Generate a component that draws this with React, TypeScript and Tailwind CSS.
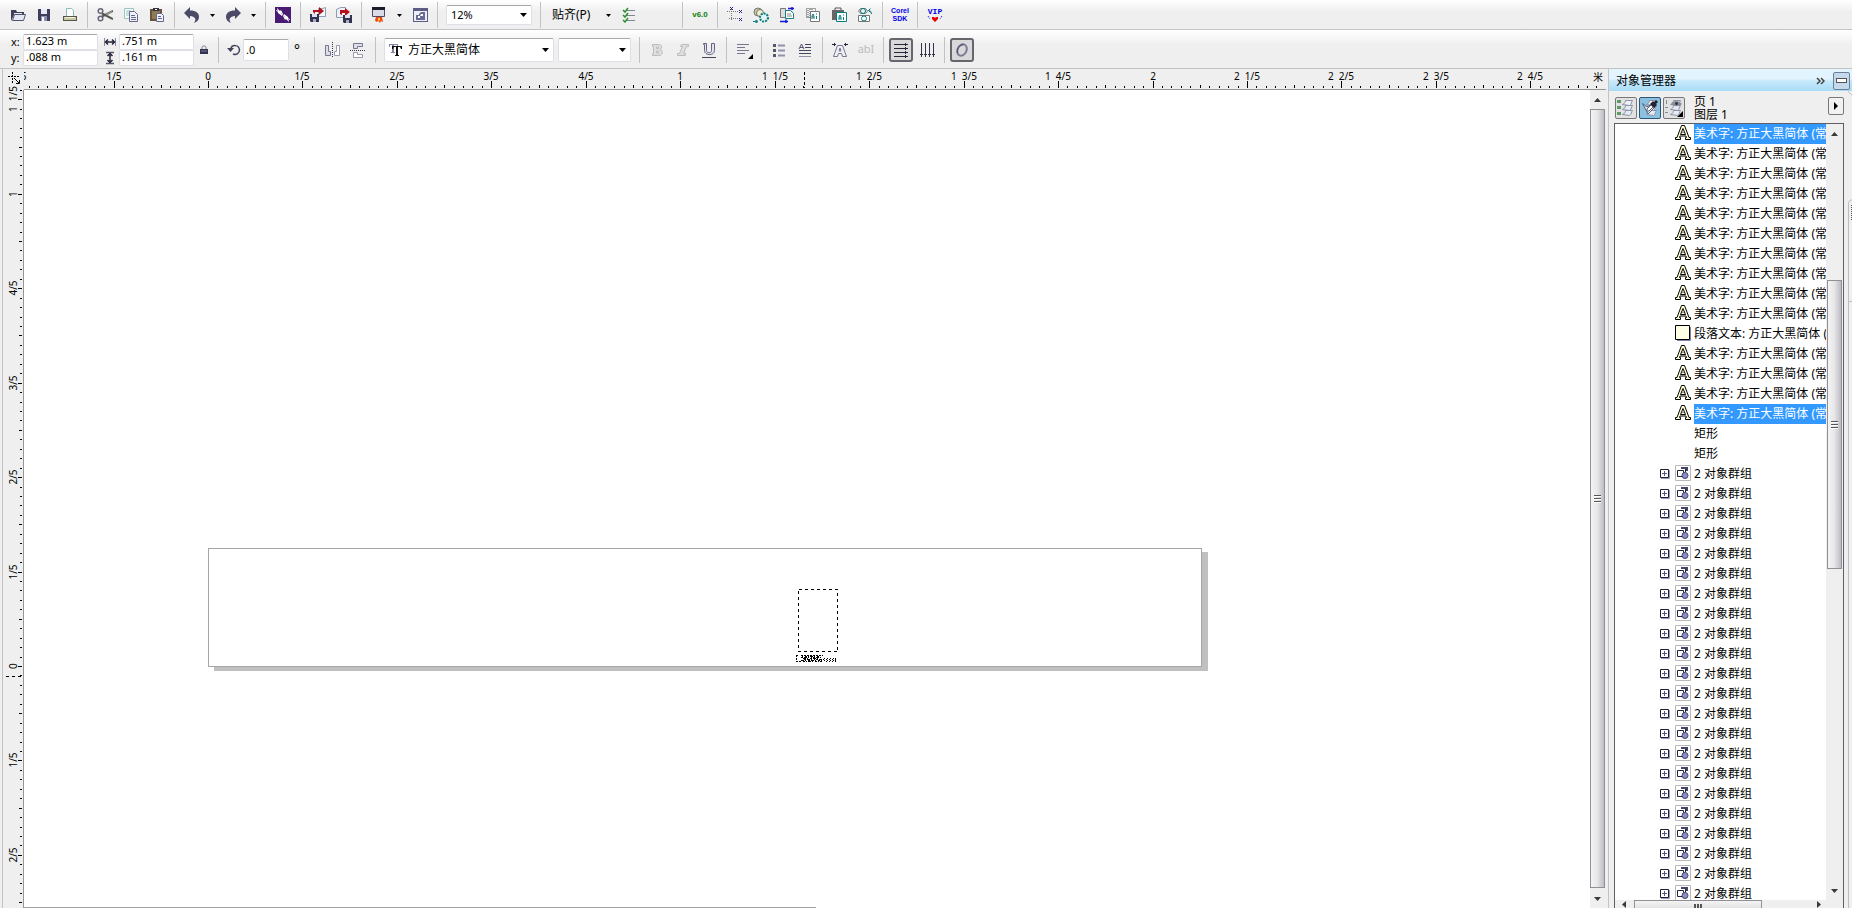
import type { ReactNode } from "react";

const SCALE = 94.45;
const FRACTIONS = ["", "1/5", "2/5", "3/5", "4/5"];

type TreeItem = {
  kind: "text" | "paragraph" | "rect" | "group";
  label: string;
  selected?: boolean;
};

const artistic: TreeItem = { kind: "text", label: "美术字: 方正大黑简体 (常规) (CHC)" };

const treeItems: TreeItem[] = [
  { ...artistic, selected: true },
  ...Array.from({ length: 9 }, () => artistic),
  { kind: "paragraph", label: "段落文本: 方正大黑简体 (常规) (CHC)" },
  ...Array.from({ length: 3 }, () => artistic),
  { ...artistic, selected: true },
  { kind: "rect", label: "矩形" },
  { kind: "rect", label: "矩形" },
  ...Array.from({ length: 22 }, (): TreeItem => ({ kind: "group", label: "2 对象群组" })),
];

function rulerLabel(step: number): string {
  const n = Math.abs(step);
  const whole = Math.floor(n / 5);
  const part = FRACTIONS[n % 5];
  if (n === 0) return "0";
  if (whole === 0) return part;
  return part ? `${whole}\u00a0\u00a0${part}` : `${whole}`;
}

function Icon({ children, size = 16 }: { children: ReactNode; size?: number }) {
  return (
    <svg width={size} height={size} viewBox={`0 0 ${size} ${size}`} fill="none" aria-hidden="true">
      {children}
    </svg>
  );
}

/* ---------- standard toolbar icons ---------- */

const OpenIcon = () => (
  <Icon>
    <path d="M1 14V3h5l1 2h7v3H4z" fill="#3f3e58" />
    <path d="M4 6h8v2H4z" fill="#dfe3f2" />
    <path d="M2.500 13.500 4.500 7.500h11l-2 6z" fill="#e3e6f3" stroke="#55546f" />
  </Icon>
);

const SaveIcon = () => (
  <Icon>
    <path d="M2 2h12v12H3l-1-1z" fill="#3f3e5c" />
    <path d="M5 2h6v5H5z" fill="#e8ebf7" />
    <path d="M5 9h6v5H5z" fill="#8f90b4" />
    <path d="M6 10h2v4H6z" fill="#fff" />
  </Icon>
);

const PrintIcon = () => (
  <Icon>
    <path d="M4.500 9V1.500h5l2 2V9" fill="#fff" stroke="#88bcb8" />
    <path d="M1 9h14v5H1z" fill="#57544a" />
    <path d="M2 10h12v3H2z" fill="#c9c7a6" />
    <path d="M3 10h10v1H3z" fill="#f5f4dc" />
  </Icon>
);

const CutIcon = () => (
  <Icon>
    <path d="M5 6.500 16 12M5 9.500 16 4" stroke="#55564f" strokeWidth="2" />
    <path d="M9 7.500 15 4.500" stroke="#b6b7aa" />
    <circle cx="3.500" cy="4" r="2.300" stroke="#66667a" strokeWidth="1.500" />
    <circle cx="3.500" cy="11.500" r="2.300" stroke="#66667a" strokeWidth="1.500" />
  </Icon>
);

const CopyIcon = () => (
  <Icon>
    <path d="M1.500 1.500h9v10h-9z" fill="#f4fbfa" stroke="#9dc4c0" />
    <path d="M3 4h5M3 6h3M3 8h3" stroke="#9dc4c0" />
    <path d="M6.500 4.500h5l3 3v7h-8z" fill="#eef0fb" stroke="#67678a" />
    <path d="M8 8.500h4M8 10.500h5M8 12.500h5" stroke="#67678a" />
  </Icon>
);

const PasteIcon = () => (
  <Icon>
    <path d="M1 2h12v12H1z" fill="#66533a" />
    <path d="M3 4h8v8H3z" fill="#8f7a58" />
    <path d="M4 1h6v3H4z" fill="#34313c" />
    <path d="M6 2h2v1H6z" fill="#fff" />
    <path d="M7.500 6.500h5l2 2v6h-7z" fill="#eef0fb" stroke="#67678a" />
    <path d="M9 9.500h3M9 11.500h4" stroke="#67678a" />
  </Icon>
);

const UndoIcon = () => (
  <Icon>
    <path d="M0 6 6 0v3.500c6 0 9 2.500 9 6.500 0 3-2 5-5 6 3-4 1-6.500-4-7V12z" fill="#4b4a66" />
  </Icon>
);

const RedoIcon = () => (
  <Icon>
    <path d="M16 6 10 0v3.500c-6 0-9 2.500-9 6.500 0 3 2 5 5 6-3-4-1-6.500 4-7V12z" fill="#4b4a66" />
  </Icon>
);

const ConnectIcon = () => (
  <Icon>
    <path d="M0 0h16v16H0z" fill="#4a1a72" />
    <path d="m2 1 3 3 1-1 2 4-1 2-4-3zM14 15l-3-3-1 1-2-4 1-2 4 3z" fill="#fff" />
    <path d="m1 3 2 2M13 11l2 2M6 6l4 4" stroke="#cdbbe0" />
  </Icon>
);

const ImportIcon = () => (
  <Icon>
    <path d="M8.500 1.500h4l3-1v9h-7z" fill="#f5f8fc" stroke="#8d9db0" />
    <path d="M3 5V3h6V0l5 4-5 4V5H5v2z" fill="#b3121d" />
    <path d="M0 7h9v8H1l-1-1z" fill="#33334f" />
    <path d="M2 7h5v3H2z" fill="#dde2f0" />
    <path d="M3 12h3v3H3z" fill="#a9abc8" />
  </Icon>
);

const ExportIcon = () => (
  <Icon>
    <path d="M.500 10.500v-8l4-2h5v10z" fill="#eef2f8" stroke="#8d9db0" />
    <path d="M4 7V3h5V1l5 4-5 4V6H6v2z" fill="#b3121d" />
    <path d="M7 8h9v8H8l-1-1z" fill="#33334f" />
    <path d="M9 8h5v3H9z" fill="#dde2f0" />
    <path d="M10 13h3v3h-3z" fill="#a9abc8" />
  </Icon>
);

const LaunchIcon = () => (
  <Icon>
    <path d="M1.500.500h12v9h-12z" fill="#d9dbe8" stroke="#4d4c66" />
    <path d="M1 0h13v3H1z" fill="#1d1c28" />
    <path d="M5 10h6l1 5-2-1-1 2-1.500-2L5 15l-1-2z" fill="#f04a12" />
    <path d="M7 11h2v2l-1 1-1-1z" fill="#ffd04a" />
  </Icon>
);

const WelcomeIcon = () => (
  <Icon>
    <path d="M1 1h15v14H1z" fill="#5c5c84" />
    <path d="M2 4h13v10H2z" fill="#eceef8" />
    <path d="M4 8h3V7l2-2h4v8H4z" fill="#6a6b94" />
    <path d="M9 7h2v2H8zM6 9h2v2H6z" fill="#fff" />
  </Icon>
);

const OptionsIcon = () => (
  <Icon>
    <path d="M6 3.500h8M6 8.500h8M6 13.500h8" stroke="#7f8796" />
    <path d="m2 3 2 2 3-4M2 8l2 2 3-4M2 13l2 2 3-4" stroke="#2f8f2c" strokeWidth="1.500" />
  </Icon>
);

const GuidesIcon = () => (
  <Icon size={18}>
    <path d="M5.500 3v12M1 5.500h11M3 12.500h12" stroke="#777" strokeDasharray="1 1" />
    <path d="m4 1 3 3m0-3L4 4M13 4l3 3m0-3-3 3M13 12l3 3m0-3-3 3" stroke="#23238c" />
  </Icon>
);

const CurveIcon = () => (
  <Icon>
    <circle cx="5" cy="5" r="4" fill="#c9c9a4" stroke="#777" />
    <circle cx="7" cy="6" r="3.500" fill="#efefcf" stroke="#777" />
    <circle cx="11" cy="10.500" r="4" fill="#e6f2f2" stroke="#0b8080" strokeWidth="2" strokeDasharray="2 1" />
    <path d="M0 14.500h4M3 13v3l2-1.500z" stroke="#0b8080" />
  </Icon>
);

const SwapIcon = () => (
  <Icon>
    <path d="M1.500 1.500h5v9h-5z" fill="#ddd" stroke="#777" />
    <path d="M6.500 3.500h5l3 3v5h-8z" fill="#fff" stroke="#118080" />
    <path d="M8 7h4M8 9h5" stroke="#888" />
    <path d="M9 1.500h6m-2-1.500v3M1 14.500h8m-2-2v4" stroke="#1515dd" strokeWidth="1.500" />
  </Icon>
);

const AiCopyIcon = () => (
  <Icon>
    <path d="M1.500 1.500h9v9h-9zM3 3v8M5 2v9M7 2v3" stroke="#555" strokeDasharray="1 1" />
    <path d="M5.500 4.500h9v10h-9z" fill="#fff" stroke="#777" />
    <path d="M7 12V9l1-2 1 2v3M7 10h2M11.500 9v3M11 7h1" stroke="#087c7c" />
  </Icon>
);

const AiPasteIcon = () => (
  <Icon>
    <path d="M1 3h12v10H1z" fill="#666" />
    <path d="M4 3V1h6v2" stroke="#555" />
    <path d="M5.500 5.500h10v9h-10z" fill="#fff" stroke="#087c7c" />
    <path d="M8 13v-3l1-2 1 2v3M8 11h2M12.500 10v3M12 8h1" stroke="#087c7c" />
  </Icon>
);

const SymbolIcon = () => (
  <Icon>
    <path d="M3.500 1.500h5l2 2.500-2 2.500h-5L1.500 4z" stroke="#777" />
    <path d="M1.500 8.500h11v6h-11z" fill="#fff" stroke="#777" />
    <circle cx="6" cy="4" r="2.500" stroke="#087c7c" />
    <circle cx="7" cy="11.500" r="2.500" stroke="#087c7c" />
    <path d="M14.500 7c0-2-1-3.500-3-3.500M13.500 1.500l-2 2 2 2" stroke="#087c7c" />
  </Icon>
);

/* ---------- property bar icons ---------- */

const WidthIcon = () => (
  <Icon size={14}>
    <path d="M1.500 3v8M12.500 3v8" stroke="#8889a8" />
    <path d="M3 7h8M5 4.500 2.500 7 5 9.500M9 4.500 11.500 7 9 9.500" stroke="#26253a" strokeWidth="1.500" />
  </Icon>
);

const HeightIcon = () => (
  <Icon size={14}>
    <path d="M3 1.500h8M3 12.500h8" stroke="#55556f" strokeWidth="1.500" />
    <path d="M7 3v8M4.500 5 7 2.500 9.500 5M4.500 9 7 11.500 9.500 9" stroke="#26253a" strokeWidth="1.500" />
  </Icon>
);

const LockIcon = () => (
  <Icon size={10}>
    <path d="M3 5V2.500c0-2 4-2 4 0V5" stroke="#77788f" />
    <path d="M1 4h8v5H1z" fill="#33334f" />
    <path d="M2 6h6" stroke="#7778a0" />
  </Icon>
);

const RotateIcon = () => (
  <Icon size={14}>
    <path d="M4 5C5 2 12 1 12.500 7c0 3-3 5.500-6.500 4" stroke="#44435c" strokeWidth="1.500" />
    <path d="M0 5h7L3.500 9z" fill="#44435c" />
  </Icon>
);

const MirrorHIcon = () => (
  <Icon>
    <path d="M8.500 0v16" stroke="#33334a" strokeDasharray="1 1" />
    <path d="M1.500 3.500h3v6h2v4h-5z" fill="#ddddec" stroke="#77788e" />
    <path d="M15.500 3.500h-3v6h-2v4h5z" fill="#fff" stroke="#9a9bb0" />
  </Icon>
);

const MirrorVIcon = () => (
  <Icon>
    <path d="M0 8.500h16" stroke="#33334a" strokeDasharray="1 1" />
    <path d="M3.500 1.500h9v3h-5v2h-4z" fill="#ddddec" stroke="#77788e" />
    <path d="M3.500 15.500h9v-3h-5v-2h-4z" fill="#fff" stroke="#9a9bb0" />
  </Icon>
);

const FontIcon = () => (
  <Icon>
    <path d="M1 2h9v3H9V3H6v7h1v1H3v-1h1V3H2v2H1z" fill="#8485a5" />
    <path d="M4 4h10v3h-1l-1-2h-2v8h1v1H7v-1h1V5H6L5 7H4z" fill="#111" />
  </Icon>
);

const BoldIcon = () => (
  <Icon>
    <path
      d="M3.500 2.500h6c4 0 4 4 1.500 5 3.500 1 3 6-1.500 6h-6v-2h1v-7h-1zM7.500 5v1.500h2V5zM7.500 9v2h2V9z"
      fill="#dfdfdf"
      stroke="#bcbcbc"
      fillRule="evenodd"
    />
  </Icon>
);

const ItalicIcon = () => (
  <Icon>
    <path d="M6.500 2.500h7v2h-2l-3 7h2v2h-8v-2h2l3-7h-2z" fill="#dfdfdf" stroke="#bcbcbc" />
  </Icon>
);

const UnderlineIcon = () => (
  <Icon>
    <path d="M2.500 1.500h3v7c0 3 5 3 5 0v-7h3v7c0 5.500-10 5.500-10 0v-6h-1z" fill="#e2e3ee" stroke="#66677f" />
    <path d="M1 15.500h14" stroke="#44455f" />
  </Icon>
);

const AlignIcon = () => (
  <Icon size={18}>
    <path d="M2 3.500h12M2 6.500h8M2 9.500h12M2 12.500h8" stroke="#77788f" />
    <path d="M18 13v5h-5z" fill="#000" />
  </Icon>
);

const BulletsIcon = () => (
  <Icon>
    <path d="M2 2h3v3H2zM2 7h3v3H2zM2 12h3v3H2z" fill="#55566c" />
    <path d="M7 3.500h7M7 8.500h7M7 13.500h7" stroke="#9192aa" strokeWidth="2" />
  </Icon>
);

const DropCapIcon = () => (
  <Icon>
    <path d="m2 7 2.500-5L7 7M3 5.500h3" stroke="#55566f" />
    <path d="M8 2.500h6M8 5.500h6M2 8.500h12M2 11.500h12" stroke="#44455f" />
    <path d="M2 14.500h12" stroke="#9192aa" />
  </Icon>
);

const CharFormatIcon = () => (
  <Icon>
    <path
      d="m1.500 14.500 4-11h5l4 11h-4l-1-3h-3l-1 3zM7 9h2L8 6z"
      fill="#eeeef7"
      stroke="#77788f"
      fillRule="evenodd"
    />
    <path d="M0 2.500h4M2.500 1v3M12 2.500h4M13.500 1v3" stroke="#26253a" />
  </Icon>
);

const HorizontalTextIcon = () => (
  <Icon>
    <path d="M1 2.500h14M1 6.500h14M1 10.500h14M1 14.500h14" stroke="#26253a" />
    <path d="M12.500 1v3M12.500 5v3M12.500 9v3M12.500 13v3" stroke="#26253a" />
  </Icon>
);

const VerticalTextIcon = () => (
  <Icon>
    <path d="M2.500 1v14M6.500 1v14M10.500 1v14M14.500 1v14" stroke="#33344a" />
    <path d="M1 12.500h3M5 12.500h3M9 12.500h3M13 12.500h3" stroke="#33344a" />
  </Icon>
);

const OpenTypeIcon = () => (
  <Icon>
    <ellipse cx="8" cy="8" rx="4.500" ry="6" transform="rotate(25 8 8)" stroke="#7a7b94" strokeWidth="2" />
    <path d="M3.500 11c-1-4 2-8 6-8.500" stroke="#44455f" />
  </Icon>
);

/* ---------- docker icons ---------- */

const LayersIcon = ({ variant }: { variant: "props" | "edit" | "view" }) => (
  <Icon size={18}>
    <path d="M5.500 15.500c3-1 3-4 3-4h7c-1 1-1 4-3 5zM5.500 10.500c3-1 3-4 3-4h7c-1 1-1 4-3 5z" fill="#e6eaf3" stroke="#8b93aa" />
    <path d="M5.500 5.500c3-1 3-4 3-4h7c-1 1-1 4-3 5z" fill="#f0f2f8" stroke="#8b93aa" />
    {variant === "props" && <path d="M0 1h4v3H0zM0 7h4v3H0zM0 13h4v3H0z" fill="#5c9c62" />}
    {variant === "edit" && (
      <>
        <path d="M1.500 4.500 6 8l5-3 3 3-7 7z" fill="#e8ecf4" stroke="#566078" />
        <path d="m9 5 3-3 1 1 2-2 2 2-2 2 1 1-3 3z" fill="#23232f" />
        <path d="m10 6 2 2-4 4H6v-2z" fill="#fff" stroke="#566078" />
      </>
    )}
    {variant === "view" && (
      <>
        <path d="M1.500 1v4M0 8.500h3M0 13.500h3" stroke="#8a8a92" />
        <path d="M6 5c2-4 8-4 11 0-3 3-8 3-11 0z" fill="#8b8f9c" />
        <circle cx="11.500" cy="4.500" r="1.500" fill="#33343c" />
        <path d="M18 12v6h-6z" fill="#000" />
      </>
    )}
  </Icon>
);

const ArtisticTextIcon = () => (
  <Icon>
    <path
      d="M.500 14.500v-2h1.500L6.500.500h3L14 12.500h1.500v2h-5v-2h1L11 11H5l-.500 1.500h1v2z"
      fill="#ffffd8"
      stroke="#000"
    />
    <path d="M5.500 9.500 8 3.500l2.500 6z" fill="#ffffd8" stroke="#000" />
    <path d="M7 8h2L8 6z" fill="#8080b0" />
  </Icon>
);

const ParagraphIcon = () => (
  <Icon>
    <path d="M15.500 2v13.500H2" stroke="#8080b0" />
    <path d="M.500.500h14v14H.500z" fill="#ffffe6" stroke="#000" />
  </Icon>
);

const GroupIcon = () => (
  <Icon>
    <path d="M.500.500h15v15H.500z" fill="#fff" stroke="#b8b8b8" />
    <path d="M6 2h7v4h-2V4H6z" fill="#44446c" />
    <path d="M2.500 5.500h6v6h-6z" fill="#fff" stroke="#222238" />
    <path d="M10.500 7V4" stroke="#222238" />
    <circle cx="10" cy="10.500" r="3" fill="#8d8dc4" stroke="#44446c" />
  </Icon>
);

const ExpandIcon = () => (
  <svg width="10" height="10" viewBox="0 0 10 10" fill="none" aria-hidden="true">
    <path d="M9.500 1v8.500H1" stroke="#9a9ac8" />
    <path d="M.500.500h8v8h-8z" fill="#fff" stroke="#1d1d30" />
    <path d="M2 4.500h5M4.500 2v5" stroke="#55558a" />
  </svg>
);

/* ---------- shared parts ---------- */

function ToolButton({
  label,
  children,
  active = false,
}: {
  label: string;
  children: ReactNode;
  active?: boolean;
}) {
  return (
    <button
      type="button"
      aria-label={label}
      className="flex h-6 w-[26px] shrink-0 items-center justify-center"
    >
      {active ? (
        <span className="flex size-6 items-center justify-center rounded-[3px] border-2 border-[#66666c] bg-[#d9d9db]">
          {children}
        </span>
      ) : (
        children
      )}
    </button>
  );
}

function Divider() {
  return (
    <span className="flex h-[26px] w-[9px] shrink-0 justify-center">
      <span className="w-px bg-[#c2c2c2]" />
    </span>
  );
}

function Caret() {
  return (
    <svg width="7" height="4" viewBox="0 0 7 4" aria-hidden="true">
      <path d="M0 0h7L3.500 4z" fill="#000" />
    </svg>
  );
}

function CaretButton({ label }: { label: string }) {
  return (
    <button
      type="button"
      aria-label={label}
      className="flex h-6 w-[15px] shrink-0 items-center justify-center"
    >
      <svg width="5" height="3" viewBox="0 0 5 3" aria-hidden="true">
        <path d="M0 0h5L2.500 3z" fill="#000" />
      </svg>
    </button>
  );
}

function Combo({ label, value, className }: { label: string; value: string; className: string }) {
  return (
    <span className="relative flex shrink-0 items-center">
      <select
        aria-label={label}
        defaultValue={value}
        className={`appearance-none rounded-[2px] border border-[#dedee6] border-t-[#a8a8ac] bg-white ${className}`}
      >
        <option>{value}</option>
      </select>
      <span className="pointer-events-none absolute right-[5px]">
        <Caret />
      </span>
    </span>
  );
}

function Field({ label, value, className }: { label: string; value: string; className: string }) {
  return (
    <input
      aria-label={label}
      defaultValue={value}
      className={`rounded-[2px] border border-[#dedee6] bg-white px-[2px] ${className}`}
    />
  );
}

function Arrow({ dir }: { dir: "up" | "down" | "left" | "right" }) {
  const shapes = {
    up: "M0 6h7L3.500 2z",
    down: "M0 2h7L3.500 6z",
    left: "M5 0v7L1 3.500z",
    right: "M2 0v7l4-3.500z",
  };
  return (
    <svg width="7" height="7" viewBox="0 0 7 7" aria-hidden="true">
      <path d={shapes[dir]} fill="#3a3a3a" />
    </svg>
  );
}

function Grip() {
  return (
    <span className="flex flex-col gap-px">
      <span className="h-[2px] w-[7px] border-b border-white bg-[#555]" />
      <span className="h-[2px] w-[7px] border-b border-white bg-[#555]" />
      <span className="h-[2px] w-[7px] border-b border-white bg-[#555]" />
    </span>
  );
}

/* ---------- toolbars ---------- */

function StandardToolbar() {
  return (
    <div className="flex h-[30px] shrink-0 items-center border-b border-[#c3c3c3] bg-linear-to-b from-white to-[#efefef] to-40% pt-px pl-[5px]">
      <ToolButton label="打开"><OpenIcon /></ToolButton>
      <ToolButton label="保存"><SaveIcon /></ToolButton>
      <ToolButton label="打印"><PrintIcon /></ToolButton>
      <Divider />
      <ToolButton label="剪切"><CutIcon /></ToolButton>
      <ToolButton label="复制"><CopyIcon /></ToolButton>
      <ToolButton label="粘贴"><PasteIcon /></ToolButton>
      <Divider />
      <ToolButton label="撤消"><UndoIcon /></ToolButton>
      <CaretButton label="撤消列表" />
      <ToolButton label="重做"><RedoIcon /></ToolButton>
      <CaretButton label="重做列表" />
      <Divider />
      <ToolButton label="Corel CONNECT"><ConnectIcon /></ToolButton>
      <Divider />
      <ToolButton label="导入"><ImportIcon /></ToolButton>
      <ToolButton label="导出"><ExportIcon /></ToolButton>
      <Divider />
      <ToolButton label="应用程序启动器"><LaunchIcon /></ToolButton>
      <CaretButton label="应用程序列表" />
      <ToolButton label="欢迎屏幕"><WelcomeIcon /></ToolButton>
      <Divider />
      <span className="mr-1 ml-1 flex">
        <Combo label="缩放级别" value="12%" className="h-5 w-[86px] pl-1 text-[11px]" />
      </span>
      <Divider />
      <button type="button" className="w-14 shrink-0 pl-[7px] text-left text-xs">
        贴齐(P)
      </button>
      <CaretButton label="贴齐列表" />
      <ToolButton label="选项"><OptionsIcon /></ToolButton>
      <span className="w-9 shrink-0" />
      <Divider />
      <ToolButton label="版本">
        <span className="font-['Liberation_Sans',sans-serif] text-[8px] font-bold text-[#0a800a]">v6.0</span>
      </ToolButton>
      <Divider />
      <ToolButton label="辅助线"><GuidesIcon /></ToolButton>
      <ToolButton label="转曲"><CurveIcon /></ToolButton>
      <ToolButton label="替换"><SwapIcon /></ToolButton>
      <ToolButton label="复制到 AI"><AiCopyIcon /></ToolButton>
      <ToolButton label="从 AI 粘贴"><AiPasteIcon /></ToolButton>
      <ToolButton label="符号"><SymbolIcon /></ToolButton>
      <Divider />
      <ToolButton label="Corel SDK">
        <span className="font-['Liberation_Sans',sans-serif] text-[7px] leading-[8px] font-bold text-[#0000f0]">
          Corel
          <br />
          SDK
        </span>
      </ToolButton>
      <Divider />
      <ToolButton label="VIP">
        <span className="flex flex-col items-center font-['Liberation_Mono',monospace] text-[8px] leading-[7px] font-bold text-[#0000f0]">
          VIP
          <svg width="16" height="8" viewBox="0 0 16 8" aria-hidden="true">
            <path d="m1 1 2 3M15 1l-2 3" stroke="#0000f0" strokeDasharray="1 1" />
            <path d="M5 2h2l1 1 1-1h2v2L8 7 5 4z" fill="#f00000" />
          </svg>
        </span>
      </ToolButton>
    </div>
  );
}

function PropertyBar() {
  return (
    <div className="flex h-[39px] shrink-0 items-center border-b border-[#c3c3c3] bg-linear-to-b from-white to-[#efefef] to-40% pt-px text-[11px]">
      <div className="grid w-[98px] shrink-0 grid-cols-[23px_1fr] items-center">
        <span className="pl-[11px] leading-4">x:</span>
        <Field label="x" value="1.623 m" className="h-4 w-full border-t-[#a8a8ac]" />
        <span className="pl-[11px] leading-4">y:</span>
        <Field label="y" value=".088 m" className="h-4 w-full" />
      </div>
      <div className="grid w-24 shrink-0 grid-cols-[21px_1fr] items-center">
        <span className="pl-[5px]"><WidthIcon /></span>
        <Field label="宽度" value=".751 m" className="h-4 w-full border-t-[#a8a8ac]" />
        <span className="pl-[5px]"><HeightIcon /></span>
        <Field label="高度" value=".161 m" className="h-4 w-full" />
      </div>
      <button
        type="button"
        aria-label="锁定比率"
        className="flex h-6 w-5 shrink-0 items-center justify-center"
      >
        <LockIcon />
      </button>
      <Divider />
      <span className="flex w-5 shrink-0 justify-end pr-[2px]"><RotateIcon /></span>
      <Field label="旋转角度" value=".0" className="h-[22px] w-[46px] shrink-0 border-t-[#a8a8ac]" />
      <span className="w-[21px] shrink-0 pl-[5px] text-sm">°</span>
      <Divider />
      <ToolButton label="水平镜像"><MirrorHIcon /></ToolButton>
      <ToolButton label="垂直镜像"><MirrorVIcon /></ToolButton>
      <Divider />
      <div className="relative ml-1 flex items-center">
        <Combo label="字体列表" value="方正大黑简体" className="h-6 w-[170px] pl-[23px] text-xs" />
        <span className="pointer-events-none absolute left-1"><FontIcon /></span>
      </div>
      <div className="mr-1 ml-1 flex">
        <Combo label="字体大小" value="" className="h-6 w-[73px]" />
      </div>
      <Divider />
      <ToolButton label="粗体"><BoldIcon /></ToolButton>
      <ToolButton label="斜体"><ItalicIcon /></ToolButton>
      <ToolButton label="下划线"><UnderlineIcon /></ToolButton>
      <Divider />
      <ToolButton label="文本对齐"><AlignIcon /></ToolButton>
      <Divider />
      <ToolButton label="项目符号列表"><BulletsIcon /></ToolButton>
      <ToolButton label="首字下沉"><DropCapIcon /></ToolButton>
      <Divider />
      <ToolButton label="字符格式化"><CharFormatIcon /></ToolButton>
      <ToolButton label="编辑文本">
        <span className="text-[11px] text-[#bcbcbc]">abI</span>
      </ToolButton>
      <Divider />
      <ToolButton label="水平文本" active><HorizontalTextIcon /></ToolButton>
      <ToolButton label="垂直文本"><VerticalTextIcon /></ToolButton>
      <Divider />
      <ToolButton label="OpenType" active><OpenTypeIcon /></ToolButton>
    </div>
  );
}

/* ---------- rulers and drawing area ---------- */

function tickLength(i: number): number {
  if (i % 10 === 0) return 7;
  return i % 5 === 0 ? 3 : 2;
}

function HorizontalRuler() {
  const origin = 184;
  const ticks = Array.from({ length: 168 }, (_, i) => i - 19);
  const labels = Array.from({ length: 17 }, (_, i) => i - 2);
  return (
    <svg width="100%" height="20" className="block text-[10px]" aria-hidden="true">
      {ticks.map((i) => (
        <rect
          key={i}
          x={Math.round(origin + (i * SCALE) / 10)}
          y={19 - tickLength(i)}
          width="1"
          height={tickLength(i)}
        />
      ))}
      {labels.map((i) => (
        <text key={i} x={Math.round(origin + i * SCALE)} y="11" textAnchor="middle">
          {rulerLabel(i)}
        </text>
      ))}
      <path d="M780.500 3v16" stroke="#000" strokeDasharray="3 2" />
      <text x="1574" y="12" textAnchor="middle" className="font-['Noto_Sans_CJK_SC',sans-serif]">
        米
      </text>
    </svg>
  );
}

function VerticalRuler() {
  const origin = 576;
  const ticks = Array.from({ length: 87 }, (_, i) => i - 61);
  const labels = Array.from({ length: 9 }, (_, i) => i - 6);
  return (
    <svg width="20" height="100%" className="block overflow-visible text-[10px]" aria-hidden="true">
      {ticks.map((i) => {
        const length = i % 10 === 0 ? 4 : tickLength(i);
        return (
          <rect
            key={i}
            x={19 - length}
            y={Math.round(origin + (i * SCALE) / 10)}
            width={length}
            height="1"
          />
        );
      })}
      {labels.map((i) => {
        const y = Math.round(origin + i * SCALE);
        return (
          <text key={i} x="14" y={y} textAnchor="middle" transform={`rotate(-90 14 ${y})`}>
            {rulerLabel(i)}
          </text>
        );
      })}
      <path d="M3 586.500h16" stroke="#000" strokeDasharray="3 3" />
    </svg>
  );
}

function DrawingArea() {
  return (
    <div className="relative min-w-0 flex-1 overflow-hidden bg-white">
      {/* page with its drop shadow */}
      <div className="absolute top-[458px] left-[184px] h-[119px] w-[994px] border border-[#a6a6a6] bg-white shadow-[6px_4px_0_0_#c0c0c0]" />
      <svg
        className="absolute top-[498px] left-[772px]"
        width="44"
        height="76"
        viewBox="0 0 44 76"
        fill="none"
        shapeRendering="crispEdges"
        aria-hidden="true"
      >
        <path d="M2.500 1.500h39v62h-39z" stroke="#000" strokeDasharray="3 3" />
        <path d="M.500 67v6M0 67.500h3M5 67.500h22M0 73.500h4" stroke="#000" strokeDasharray="2 1" />
        <path d="M5 69.500h20M8 71.500h20" stroke="#000" strokeDasharray="2 1 3 1 1 2 1 1" />
        <path d="M7 70.500h17M5 72.500h21" stroke="#000" strokeDasharray="3 1 1 2 2 1" />
        <path d="M6 68.500h18M4 73.500h22" stroke="#000" strokeDasharray="1 2 2 1 1 1 3 1" />
        <path d="M28 70.500h11M30 71.500h10M28 72.500h11M30 73.500h8" stroke="#000" strokeDasharray="1 2" />
        <path d="M39.500 70v4" stroke="#000" />
      </svg>
      <div className="absolute bottom-0 left-0 h-px w-[792px] bg-[#a0a0a0]" />
    </div>
  );
}

function Workspace() {
  return (
    <main className="flex min-w-0 flex-1 flex-col">
      <div className="flex h-[21px] shrink-0">
        <div className="ml-[2px] flex w-[22px] shrink-0 items-center justify-center border-l border-[#c3c3c3]">
          <svg width="14" height="18" viewBox="0 0 14 18" fill="none" aria-hidden="true">
            <path d="M5.500 1v12M1 5.500h12" stroke="#000" strokeDasharray="2 1" />
            <path d="m7 7 5 5M12.500 9v3.500H9" stroke="#000" />
          </svg>
        </div>
        <div className="min-w-0 flex-1 border-b border-[#969696]">
          <HorizontalRuler />
        </div>
      </div>
      <div className="flex min-h-0 flex-1">
        <div className="ml-[2px] w-[22px] shrink-0 border-r border-l border-r-[#969696] border-l-[#c3c3c3]">
          <VerticalRuler />
        </div>
        <DrawingArea />
        <div className="flex w-4 shrink-0 flex-col bg-[#efefef] pr-px">
          <span className="flex h-[19px] items-center justify-center"><Arrow dir="up" /></span>
          <span className="flex flex-1 items-center justify-center border border-[#909096] bg-linear-to-r from-[#f4f4f4] via-[#e6e6e8] to-[#bcbcc4]">
            <Grip />
          </span>
          <span className="flex h-5 items-center justify-center"><Arrow dir="down" /></span>
        </div>
      </div>
    </main>
  );
}

/* ---------- object manager docker ---------- */

function DockerButton({
  label,
  active = false,
  children,
}: {
  label: string;
  active?: boolean;
  children: ReactNode;
}) {
  return (
    <button
      type="button"
      aria-label={label}
      className={`flex size-[22px] items-center justify-center rounded-[2px] border ${
        active ? "border-[#2c5876] bg-[#8cc0e0]" : "border-[#77777c] bg-[#e2e2e2]"
      }`}
    >
      {children}
    </button>
  );
}

function TreeRow({ item }: { item: TreeItem }) {
  return (
    <li className="flex h-5 items-center">
      <span className="flex w-[60px] shrink-0 justify-end pr-[5px]">
        {item.kind === "group" && (
          <button type="button" aria-label="展开">
            <ExpandIcon />
          </button>
        )}
      </span>
      <span className="h-[18px] w-[19px] shrink-0">
        {item.kind === "text" && <ArtisticTextIcon />}
        {item.kind === "paragraph" && <ParagraphIcon />}
        {item.kind === "group" && <GroupIcon />}
      </span>
      <span
        className={`h-5 whitespace-nowrap leading-5 ${
          item.selected ? "bg-[#3399ff] text-white" : "text-black"
        }`}
      >
        {item.label}
      </span>
    </li>
  );
}

function ObjectManager() {
  return (
    <aside className="flex w-[244px] shrink-0 flex-col border-l border-[#c3c3c3] text-xs">
      <div className="flex h-[22px] shrink-0 items-center bg-linear-to-b from-[#e2f4fd] from-45% via-[#c6e9fb] via-55% to-[#a9dcf8] pt-px pr-[2px] pl-[7px]">
        <h2 className="flex-1">对象管理器</h2>
        <button type="button" aria-label="折叠" className="mr-2 flex">
          <svg width="9" height="8" viewBox="0 0 9 8" fill="none" aria-hidden="true">
            <path d="m1 1 3 3-3 3M5 1l3 3-3 3" stroke="#444" strokeWidth="1.500" />
          </svg>
        </button>
        <button
          type="button"
          aria-label="最小化"
          className="flex h-[18px] w-[17px] items-center justify-center rounded-[2px] border border-[#68809a] bg-[#c5d9ea]"
        >
          <span className="h-[5px] w-[11px] border border-[#555] bg-white" />
        </button>
      </div>
      <div className="flex min-h-0 flex-1">
        <div className="flex min-w-0 flex-1 flex-col pl-[5px]">
          <div className="flex h-8 shrink-0 items-start gap-[2px] pt-[6px] pl-px">
            <DockerButton label="显示对象属性"><LayersIcon variant="props" /></DockerButton>
            <DockerButton label="跨图层编辑" active><LayersIcon variant="edit" /></DockerButton>
            <DockerButton label="图层管理器视图"><LayersIcon variant="view" /></DockerButton>
            <p className="-mt-[2px] flex-1 pl-[7px] leading-[13px]">
              页 1
              <br />
              图层 1
            </p>
            <button
              type="button"
              aria-label="对象管理器选项"
              className="flex h-[18px] w-4 items-center justify-center rounded-[2px] border border-[#77777c] bg-[#f2f2f2]"
            >
              <svg width="4" height="8" viewBox="0 0 4 8" aria-hidden="true">
                <path d="M0 0v8l4-4z" fill="#000" />
              </svg>
            </button>
          </div>
          <div className="flex min-h-0 flex-1 flex-col border border-b-0 border-[#606064] bg-white">
            <div className="flex min-h-0 flex-1">
              <ul className="min-w-0 flex-1 overflow-hidden">
                {treeItems.map((item, index) => (
                  <TreeRow key={index} item={item} />
                ))}
              </ul>
              <div className="flex w-[17px] shrink-0 flex-col bg-[#efefef] px-px">
                <span className="flex h-[19px] items-center justify-center"><Arrow dir="up" /></span>
                <span className="basis-[137px]" />
                <span className="flex h-[289px] shrink-0 items-center justify-center border border-[#909096] bg-linear-to-r from-[#f4f4f4] via-[#e6e6e8] to-[#bcbcc4]">
                  <Grip />
                </span>
                <span className="mt-auto flex h-[19px] items-center justify-center">
                  <Arrow dir="down" />
                </span>
              </div>
            </div>
            <div className="flex h-2 shrink-0 overflow-hidden bg-[#efefef]">
              <span className="flex w-[19px] items-end justify-center"><Arrow dir="left" /></span>
              <span className="flex h-4 w-32 justify-center gap-px border border-[#909096] bg-linear-to-b from-[#f4f4f4] to-[#d4d4d8] pt-[3px]">
                <span className="h-2 w-[2px] bg-[#555]" />
                <span className="h-2 w-[2px] bg-[#555]" />
                <span className="h-2 w-[2px] bg-[#555]" />
              </span>
              <span className="mr-[21px] ml-auto flex items-end"><Arrow dir="right" /></span>
            </div>
          </div>
        </div>
        {/* edge of the docker tab strip */}
        <svg width="8" height="100%" className="shrink-0" fill="none" aria-hidden="true">
          <path d="M4.500 0c0 3 4 2 4 6M8 109c-3 0-3.500 2-3.500 4v900M4 210.500h4" stroke="#bdbdbd" />
          <path d="M7.500 114v15" stroke="#555" strokeDasharray="1 1" />
        </svg>
      </div>
    </aside>
  );
}

export default function App() {
  return (
    <div className="flex h-screen flex-col overflow-hidden bg-[#efefef] font-['Noto_Sans','Noto_Sans_CJK_SC',sans-serif] text-black">
      <StandardToolbar />
      <PropertyBar />
      <div className="flex min-h-0 flex-1">
        <Workspace />
        <div className="w-[2px] shrink-0" />
        <ObjectManager />
      </div>
    </div>
  );
}
